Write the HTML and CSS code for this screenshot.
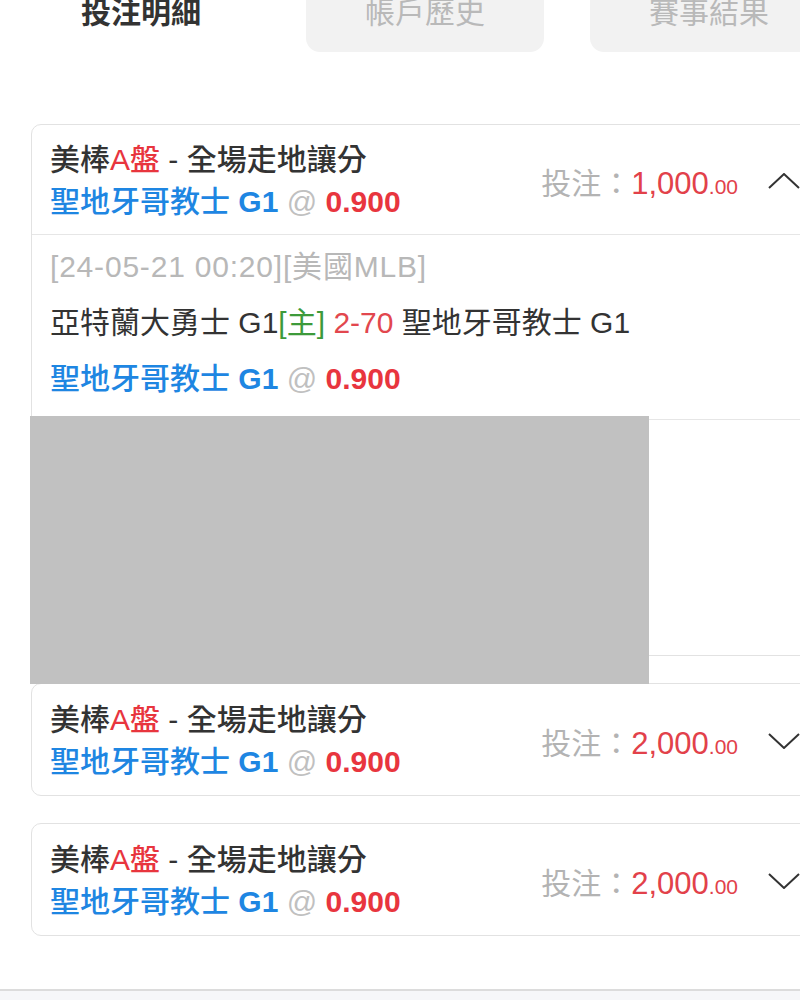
FILE: index.html
```html
<!DOCTYPE html>
<html lang="zh-Hant">
<head>
<meta charset="utf-8">
<title>投注明細</title>
<link rel="stylesheet" href="styles.css">
</head>
<body>
<div class="page">
  <nav class="tabs">
    <div class="tab active">投注明細</div>
    <div class="tab">帳戶歷史</div>
    <div class="tab">賽事結果</div>
  </nav>

  <div class="list">
    <section class="card">
      <header class="card-head head-open">
        <div class="title">
          <div class="line">美棒<span class="red">A盤</span> - 全場走地讓分</div>
          <div class="line"><span class="pick">聖地牙哥教士 <b>G1</b></span> <span class="at">@</span> <span class="odds">0.900</span></div>
        </div>
        <div class="stake"><span class="stake-label">投注：</span><span class="amt">1,000<small>.00</small></span></div>
        <svg class="chev" width="32" height="16" viewBox="0 0 32 16"><polyline points="1,15 16,1 31,15" fill="none" stroke="#333" stroke-width="2"/></svg>
      </header>
      <div class="card-body">
        <div class="bline date">[24-05-21 00:20][美國MLB]</div>
        <div class="bline">亞特蘭大勇士 G1<span class="green">[主]</span> <span class="score">2-70</span> 聖地牙哥教士 G1</div>
        <div class="bline"><span class="pick">聖地牙哥教士 <b>G1</b></span> <span class="at">@</span> <span class="odds">0.900</span></div>
      </div>
      <div class="card-extra"></div>
      <div class="redact"></div>
    </section>

    <section class="card">
      <header class="card-head">
        <div class="title">
          <div class="line">美棒<span class="red">A盤</span> - 全場走地讓分</div>
          <div class="line"><span class="pick">聖地牙哥教士 <b>G1</b></span> <span class="at">@</span> <span class="odds">0.900</span></div>
        </div>
        <div class="stake"><span class="stake-label">投注：</span><span class="amt">2,000<small>.00</small></span></div>
        <svg class="chev" width="32" height="16" viewBox="0 0 32 16"><polyline points="1,1 16,15 31,1" fill="none" stroke="#333" stroke-width="2"/></svg>
      </header>
    </section>

    <section class="card">
      <header class="card-head">
        <div class="title">
          <div class="line">美棒<span class="red">A盤</span> - 全場走地讓分</div>
          <div class="line"><span class="pick">聖地牙哥教士 <b>G1</b></span> <span class="at">@</span> <span class="odds">0.900</span></div>
        </div>
        <div class="stake"><span class="stake-label">投注：</span><span class="amt">2,000<small>.00</small></span></div>
        <svg class="chev" width="32" height="16" viewBox="0 0 32 16"><polyline points="1,1 16,15 31,1" fill="none" stroke="#333" stroke-width="2"/></svg>
      </header>
    </section>
  </div>

  <footer class="footer"></footer>
</div>
</body>
</html>
```

FILE: styles.css
```css
html, body {
  margin: 0;
  padding: 0;
  background: #fff;
  overflow: hidden;
}

body {
  font-family: "Liberation Sans", "Noto Sans CJK TC", sans-serif;
  color: #333;
}

.page {
  width: 800px;
  height: 1000px;
  overflow: hidden;
  display: flex;
  flex-direction: column;
}

.tabs {
  display: flex;
  gap: 46px;
  padding-left: 22px;
  margin-top: -26px;
  flex: none;
}

.tab {
  flex: none;
  width: 238px;
  height: 78px;
  line-height: 78px;
  text-align: center;
  font-size: 30px;
  color: #b9b9b9;
  background: #f2f2f2;
  border-radius: 14px;
}

.tab.active {
  background: #fff;
  color: #333;
  font-weight: bold;
}

.list {
  display: flex;
  flex-direction: column;
  gap: 27px;
  margin-top: 72px;
  padding-left: 31px;
}

.card {
  position: relative;
  width: 790px;
  box-sizing: border-box;
  border: 1px solid #e2e2e2;
  border-radius: 10px;
  background: #fff;
  flex: none;
}

.card-head {
  display: flex;
  align-items: center;
  padding: 15px 20px 12px 18px;
}

.head-open {
  padding: 14px 20px 11px 18px;
  border-bottom: 1px solid #e6e6e6;
}

.title {
  flex: 1;
  min-width: 0;
}

.line {
  font-size: 30px;
  line-height: 42px;
  white-space: nowrap;
  color: #333;
  font-weight: 500;
}

.red { color: #e8353e; }

.pick {
  color: #1e86e2;
  font-weight: 500;
}

.pick b {
  font-weight: bold;
}

.at {
  color: #c0c0c0;
  font-weight: normal;
}

.odds {
  color: #e8353e;
  font-weight: bold;
}

.stake {
  font-size: 30px;
  white-space: nowrap;
  margin-right: 30px;
}

.stake-label {
  color: #b3b3b3;
}

.amt {
  color: #e2414a;
  font-size: 31px;
}

.amt small {
  font-size: 21px;
}

.chev {
  flex: none;
  display: block;
}

.card-body {
  padding: 4px 18px 12px 18px;
  border-bottom: 1px solid #e6e6e6;
}

.bline {
  font-size: 30px;
  line-height: 56px;
  white-space: nowrap;
  color: #333;
}

.date {
  color: #b8b8b8;
  letter-spacing: 0.8px;
}

.green { color: #3d9a3a; }

.score { color: #e2474e; }

.card-extra {
  height: 235px;
}

.redact {
  position: absolute;
  left: -2px;
  top: 291px;
  width: 619px;
  height: 268px;
  background: #c1c1c1;
  z-index: 2;
}

.footer {
  margin-top: 53px;
  flex: 1;
  border-top: 2px solid #dcdcdc;
  background: #f6f7f9;
}
```
